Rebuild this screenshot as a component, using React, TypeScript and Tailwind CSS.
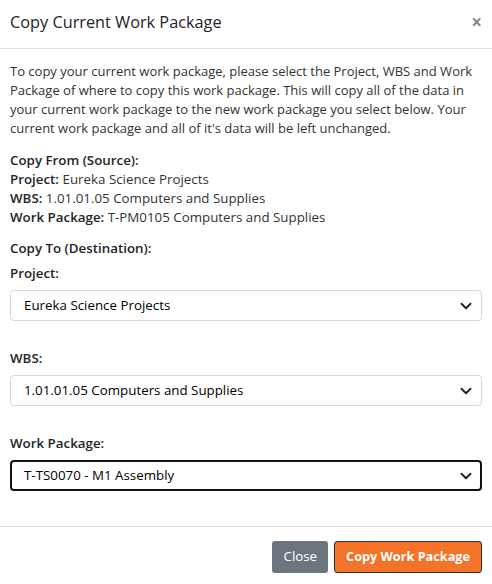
import React from 'react';

const font = { fontFamily: '"Open Sans", "Noto Sans", sans-serif' };

function Chevron() {
  return (
    <svg width="12" height="12" viewBox="0 0 16 16" className="pointer-events-none absolute right-[10px] top-1/2 -translate-y-1/2">
      <path d="M2 5l6 6 6-6" fill="none" stroke="#212529" strokeWidth="2.6" strokeLinecap="round" strokeLinejoin="round" />
    </svg>
  );
}

function Field({ label, value, focused }: { label: string; value: string; focused?: boolean }) {
  return (
    <div>
      <div className="font-semibold text-[#212529] leading-[19px]">{label}</div>
      <div className="relative mt-[7px]">
        <select
          defaultValue={value}
          className={
            focused
              ? 'w-full h-[31px] appearance-none rounded-[4px] border-2 border-[#111] bg-white pl-[12px] text-[13.33px] font-medium text-black outline-none'
              : 'w-full h-[31px] appearance-none rounded-[4px] border border-[#d6d9dc] bg-white pl-[13px] text-[13.33px] font-medium text-black outline-none'
          }
          style={font}
        >
          <option>{value}</option>
        </select>
        <Chevron />
      </div>
    </div>
  );
}

export default function App() {
  return (
    <div className="w-[492px] h-[584px] bg-white text-[13.33px] text-[#333] flex flex-col" style={font}>
      {/* header */}
      <div className="h-[49px] border-b border-[#dee2e6] flex items-center justify-between px-[10px] pb-[4px]">
        <h1 className="text-[16.3px] text-[#212529] font-normal">Copy Current Work Package</h1>
        <span className="text-[#888] text-[19px] font-bold leading-none">×</span>
      </div>

      {/* body */}
      <div className="flex-1 px-[10px] pt-[13px] leading-[19px]">
        <p className="text-[13px]">
          To copy your current work package, please select the Project, WBS and Work
          <br />
          Package of where to copy this work package. This will copy all of the data in
          <br />
          your current work package to the new work package you select below. Your
          <br />
          current work package and all of it's data will be left unchanged.
        </p>

        <div className="mt-[13px]">
          <div className="font-semibold text-[#212529]">Copy From (Source):</div>
          <div><span className="font-semibold text-[#212529]">Project:</span> Eureka Science Projects</div>
          <div><span className="font-semibold text-[#212529]">WBS:</span> 1.01.01.05 Computers and Supplies</div>
          <div><span className="font-semibold text-[#212529]">Work Package:</span> T-PM0105 Computers and Supplies</div>
        </div>

        <div className="mt-[12px] font-semibold text-[#212529]">Copy To (Destination):</div>

        <div className="mt-[6px] flex flex-col gap-[28px]">
          <Field label="Project:" value="Eureka Science Projects" />
          <Field label="WBS:" value="1.01.01.05 Computers and Supplies" />
          <Field label="Work Package:" value="T-TS0070 - M1 Assembly" focused />
        </div>
      </div>

      {/* footer */}
      <div className="h-[58px] border-t border-[#dee2e6] flex justify-end items-start gap-[6px] pt-[14px] pr-[10px]">
        <button className="h-[32px] px-[11px] rounded-[3px] bg-[#6c757d] text-white text-[13.33px]" style={font}>Close</button>
        <button className="h-[32px] px-[11px] rounded-[3px] bg-[#f37329] border border-[#333] text-white text-[12.7px] font-bold" style={font}>
          Copy Work Package
        </button>
      </div>
    </div>
  );
}
